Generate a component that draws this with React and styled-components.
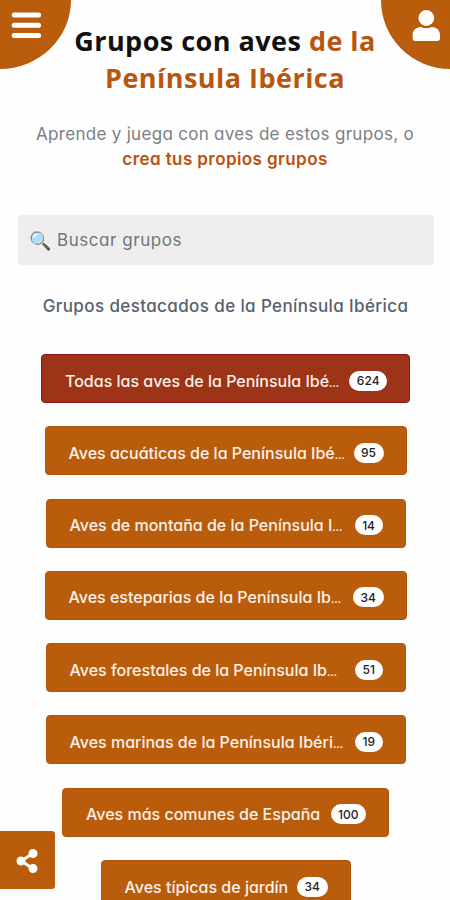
import React from 'react';
import styled, { createGlobalStyle } from 'styled-components';
import { FaShareAlt } from 'react-icons/fa';

const GlobalStyle = createGlobalStyle`
  * { box-sizing: border-box; }
  body { margin: 0; background: #fefefe; }
`;

const Page = styled.main`
  position: relative;
  width: 450px;
  height: 900px;
  overflow: hidden;
  display: flex;
  flex-direction: column;
  align-items: center;
  background: #fefefe;
  font-family: Inter, sans-serif;
  font-feature-settings: 'cv11';

  & > * { flex: none; }
`;

const CornerButton = styled.button`
  position: absolute;
  top: 0;
  ${(p) => (p.$side === 'left' ? 'left: 0;' : 'right: 0;')}
  width: ${(p) => (p.$side === 'left' ? '71px' : '69px')};
  height: 69px;
  padding: ${(p) => (p.$side === 'left' ? '12px 0 0 11px' : '10px 0 0 31px')};
  border: 0;
  border-radius: ${(p) => (p.$side === 'left' ? '0 0 100% 0' : '0 0 0 100%')};
  background: #b95d0c;
  color: #fff;
  display: flex;
  align-items: flex-start;

  svg { flex: none; }
`;

const Title = styled.h1`
  margin: 22px 0 0;
  width: 330px;
  text-align: center;
  font: 700 27px/37px 'Open Sans', sans-serif;
  letter-spacing: 0.47px;
  color: #111;
`;

const TitleAccent = styled.span`
  color: #b9560d;
`;

const Intro = styled.p`
  margin: 26px 0 0;
  width: 400px;
  text-align: center;
  font-size: 17px;
  line-height: 25px;
  letter-spacing: 0.3px;
  color: #7b7f85;
`;

const IntroLink = styled.a`
  display: block;
  font-weight: 600;
  letter-spacing: 0.42px;
  color: #b9520f;
`;

const SearchBox = styled.div`
  margin: 43px 0 0 2px;
  width: 416px;
  height: 50px;
  padding: 0 11px;
  display: flex;
  align-items: center;
  gap: 6px;
  border-radius: 4px;
  background: #eee;
  color: #72767a;
  font-size: 17px;
  letter-spacing: 0.55px;
`;

const SearchGlyph = styled.span`
  font-size: 18px;
  letter-spacing: 0;
`;

const SectionTitle = styled.h2`
  margin: 29px 0 0 1px;
  font-size: 17px;
  line-height: 24px;
  font-weight: 450;
  letter-spacing: 0.39px;
  color: #59616c;
`;

const GroupList = styled.div`
  margin: 36px 0 0 1px;
  display: flex;
  flex-direction: column;
  align-items: center;
  gap: 23.3px;
`;

const GroupButton = styled.button`
  flex: none;
  width: ${(p) => p.$width}px;
  height: 49px;
  padding: 4px 22px 0 23px;
  display: flex;
  align-items: center;
  justify-content: space-between;
  border: 1px solid ${(p) => (p.$featured ? '#93141a' : '#b1540c')};
  border-radius: 4px;
  background: ${(p) => (p.$featured ? '#9d3317' : '#b95d0c')};
  color: #fdf0e8;
  font: inherit;
  font-size: 16px;
  font-weight: 450;
  letter-spacing: 0;
  white-space: nowrap;
`;

const Ellipsis = styled.span`
  font-size: 10px;
  font-weight: 700;
`;

const Count = styled.span`
  height: 20px;
  padding: 0 7.5px;
  display: flex;
  align-items: center;
  border-radius: 10px;
  background: #fff;
  color: #1d2226;
  font-size: 12px;
  font-weight: 500;
`;

const ShareButton = styled.button`
  position: absolute;
  left: 0;
  bottom: 11px;
  width: 55px;
  height: 58px;
  padding: 2px 1px 0 0;
  display: flex;
  align-items: center;
  justify-content: center;
  border: 0;
  border-radius: 0 3px 3px 0;
  background: #b95d0c;
  color: #fff;
  font-size: 24px;
`;

const MenuIcon = () => (
  <svg width="31" height="28" viewBox="0 0 31 28" fill="none" stroke="currentColor" strokeWidth="5" strokeLinecap="round">
    <path d="M3.2 3H27.6M3.2 13.2H27.6M3.2 23.6H27.6" />
  </svg>
);

const UserIcon = () => (
  <svg width="29" height="32" viewBox="0 0 29 32" fill="currentColor">
    <circle cx="14.3" cy="8" r="7.9" />
    <path d="M8.8 17C3.8 17 .6 20.6.6 25.2V28.2C.6 30 1.7 31 3.4 31H25.2C27 31 28 30 28 28.2V25.2C28 20.6 24.8 17 19.8 17C16.2 18.7 12.4 18.7 8.8 17Z" />
  </svg>
);

const groups = [
  { name: 'Todas las aves de la Península Ibé', cut: true, count: 624, width: 369, featured: true },
  { name: 'Aves acuáticas de la Península Ibé', cut: true, count: 95, width: 362 },
  { name: 'Aves de montaña de la Península I', cut: true, count: 14, width: 360 },
  { name: 'Aves esteparias de la Península Ib', cut: true, count: 34, width: 362 },
  { name: 'Aves forestales de la Península Ib', cut: true, count: 51, width: 360 },
  { name: 'Aves marinas de la Península Ibéri', cut: true, count: 19, width: 360 },
  { name: 'Aves más comunes de España', count: 100, width: 327 },
  { name: 'Aves típicas de jardín', count: 34, width: 250 },
];

export default function App() {
  return (
    <>
      <GlobalStyle />
      <Page>
        <Title>
          Grupos con aves <TitleAccent>de la<br />Península Ibérica</TitleAccent>
        </Title>
        <Intro>
          Aprende y juega con aves de estos grupos, o
          <IntroLink>crea tus propios grupos</IntroLink>
        </Intro>
        <SearchBox>
          <SearchGlyph>🔍</SearchGlyph>
          Buscar grupos
        </SearchBox>
        <SectionTitle>Grupos destacados de la Península Ibérica</SectionTitle>
        <GroupList>
          {groups.map((g) => (
            <GroupButton key={g.name} $width={g.width} $featured={g.featured}>
              <span>
                {g.name}
                {g.cut && <Ellipsis>…</Ellipsis>}
              </span>
              <Count>{g.count}</Count>
            </GroupButton>
          ))}
        </GroupList>
        <CornerButton $side="left" aria-label="Menú"><MenuIcon /></CornerButton>
        <CornerButton $side="right" aria-label="Cuenta"><UserIcon /></CornerButton>
        <ShareButton aria-label="Compartir"><FaShareAlt /></ShareButton>
      </Page>
    </>
  );
}
